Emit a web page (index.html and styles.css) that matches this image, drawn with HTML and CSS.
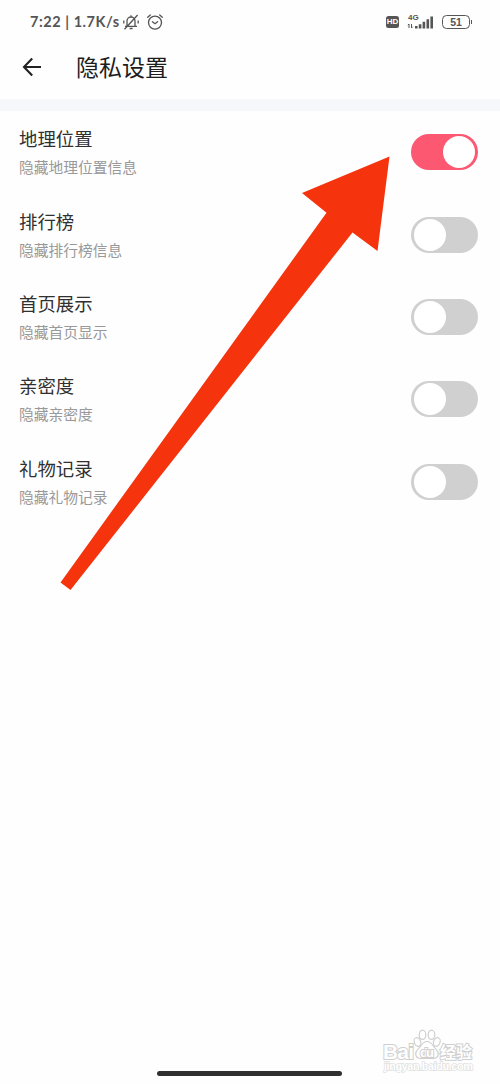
FILE: index.html
```html
<!DOCTYPE html>
<html lang="zh-CN">
<head>
<meta charset="utf-8">
<title>隐私设置</title>
<link rel="stylesheet" href="styles.css">
</head>
<body>
<div class="screen">
  <div class="status">
    <div class="status-left">
      <span class="status-text">7:22 | 1.7K/s</span>
      <svg class="bell" width="18" height="18" viewBox="0 0 18 18" fill="none" stroke="#555" stroke-width="1.3">
        <path d="M3 13.300h12M5 13V8a4 4 0 0 1 8 0v5M7.600 15.500h3M9 2.200V4M2.500 16.200 15.600 2M1.800 7.400v3.200M16.200 7.400v3.200"/>
      </svg>
      <svg class="alarm" width="18" height="18" viewBox="0 0 18 18" fill="none" stroke="#555" stroke-width="1.3" stroke-linecap="round">
        <circle cx="9" cy="9.6" r="6.500"/>
        <path d="M1.700 4.300 4.300 2M13.700 2l2.600 2.300M6.400 8.700 9 10.700l2.600-2"/>
      </svg>
    </div>
    <div class="status-right">
      <span class="hd">HD</span>
      <svg class="signal" width="28" height="18" viewBox="0 0 28 18">
        <text class="net" x="1" y="7.3">4G</text>
        <path d="M2 11v4M.8 12.200 2 11M4.500 11v4M4.500 15l1.200-1.200" fill="none" stroke="#555" stroke-width="1"/>
        <path d="M8 13h2.600v2.500H8zM11.800 11.200h2.600v4.300h-2.600zM15.600 8.800h2.600v6.700h-2.600zM19.500 6.200h2.600v9.300h-2.600zM23.400 3.500H26v12h-2.600z" fill="#555"/>
      </svg>
      <span class="battery">51</span>
    </div>
  </div>
  <header class="header">
    <svg width="20" height="20" viewBox="0 0 20 20" fill="none" stroke="#222" stroke-width="2.1">
      <path d="M19 10H2.200M10.200 1.600 2 10l8.200 8.400"/>
    </svg>
    <h1 class="title">隐私设置</h1>
  </header>
  <div class="band"></div>
  <main class="list">
    <div class="row"><div><div class="name">地理位置</div><div class="desc">隐藏地理位置信息</div></div><div class="toggle on"></div></div>
    <div class="row"><div><div class="name">排行榜</div><div class="desc">隐藏排行榜信息</div></div><div class="toggle"></div></div>
    <div class="row"><div><div class="name">首页展示</div><div class="desc">隐藏首页显示</div></div><div class="toggle"></div></div>
    <div class="row"><div><div class="name">亲密度</div><div class="desc">隐藏亲密度</div></div><div class="toggle"></div></div>
    <div class="row"><div><div class="name">礼物记录</div><div class="desc">隐藏礼物记录</div></div><div class="toggle"></div></div>
  </main>
  <svg class="arrow" width="500" height="600" viewBox="0 0 500 600">
    <path d="M389.500 156.500 302 193l24.500 19.700L60.500 582.500 70.500 590 352.500 232.500l25 18.500z" fill="#f5340e"/>
  </svg>
  <svg class="watermark" width="110" height="54" viewBox="0 0 110 54">
    <g fill="#fff" stroke="#cfcfcf" stroke-width="1.2">
      <ellipse cx="46.500" cy="18" rx="3.200" ry="4.500" transform="rotate(-20 46.500 18)"/>
      <ellipse cx="51.500" cy="10.800" rx="3.300" ry="4.600"/>
      <ellipse cx="60.500" cy="10.800" rx="3.300" ry="4.600"/>
      <ellipse cx="65.800" cy="18" rx="3.200" ry="4.500" transform="rotate(20 65.800 18)"/>
      <path d="M56 17.500c-4 0-5.500 3.500-7.500 6s-4 3.500-3.800 6.700c.3 3.600 3.500 4.600 6.300 4.300h10c2.800.3 6-.7 6.300-4.300.2-3.200-1.800-4.200-3.800-6.700s-3.500-6-7.500-6z"/>
    </g>
    <text class="mark" x="12" y="34.500" textLength="31">Bai</text>
    <text class="mark du" x="49" y="32.500" textLength="14">du</text>
    <text class="mark cn" x="69" y="33.500" textLength="32">经验</text>
    <text class="url" x="13" y="46" textLength="89">jingyan.baidu.com</text>
  </svg>
  <div class="home"></div>
</div>
</body>
</html>
```
FILE: styles.css
```css
body {
  margin: 0;
  background: #fefefe;
  font-family: "Noto Sans CJK SC", sans-serif;
}
.screen {
  position: relative;
  width: 500px;
  height: 1084px;
  overflow: hidden;
  display: flex;
  flex-direction: column;
}
.status {
  box-sizing: border-box;
  height: 44px;
  padding: 0 28px 0 30px;
  display: flex;
  align-items: center;
  justify-content: space-between;
  color: #555;
}
.status-left, .status-right {
  display: flex;
  align-items: center;
}
.status-text {
  width: 90px;
  font: 700 14.5px/20px Lato, sans-serif;
  letter-spacing: 0.55px;
  white-space: nowrap;
}
.bell { margin-left: 2px; }
.alarm { margin-left: 6px; }
.hd {
  width: 13px;
  height: 12px;
  border-radius: 2.5px;
  background: #555;
  color: #fff;
  font: bold 8px/12px "Liberation Sans", sans-serif;
  text-align: center;
}
.signal { margin-left: 8px; }
.net { font: bold 8px "Liberation Sans", sans-serif; fill: #555; }
.battery {
  position: relative;
  box-sizing: border-box;
  width: 28px;
  height: 14px;
  margin: 0 2px 0 7px;
  border: 1.5px solid #555;
  border-radius: 4.5px;
  font: bold 10.5px/12px "Liberation Sans", sans-serif;
  text-align: center;
}
.battery::after {
  content: "";
  position: absolute;
  right: -3px;
  top: 3.5px;
  width: 1.5px;
  height: 4px;
  background: #555;
}
.header {
  height: 55px;
  padding-left: 22px;
  display: flex;
  align-items: center;
  gap: 34px;
}
.header svg { margin-top: -9px; }
.title {
  margin: -11px 0 0;
  font-size: 23px;
  line-height: 34px;
  font-weight: 400;
  color: #1d1d1d;
}
.band { height: 12px; background: #f6f7fa; }
.list { padding: 0 22px 0 19px; }
.row {
  height: 82.4px;
  display: flex;
  align-items: center;
  justify-content: space-between;
}
.name {
  font-size: 18.4px;
  line-height: 28px;
  color: #303030;
}
.desc {
  margin-top: 2px;
  font-size: 14.75px;
  line-height: 26px;
  color: #999;
}
.toggle {
  box-sizing: border-box;
  width: 67px;
  height: 36px;
  padding: 2px 3px;
  border-radius: 18px;
  background: #d0d0d0;
  display: flex;
  align-items: center;
}
.toggle::before {
  content: "";
  width: 32px;
  height: 32px;
  border-radius: 50%;
  background: #fff;
}
.toggle.on { background: #fd5871; justify-content: flex-end; }
.arrow { position: absolute; left: 0; top: 0; }
.watermark { position: absolute; left: 371px; top: 1024px; }
.mark {
  font: bold 21px "Liberation Sans", sans-serif;
  fill: #fff;
  stroke: #cfcfcf;
  stroke-width: 2px;
  paint-order: stroke;
}
.du { font-size: 13px; }
.cn { font: bold 16px "Noto Sans CJK SC", sans-serif; }
.url {
  font: bold 11px "Liberation Sans", sans-serif;
  fill: #fff;
  stroke: #e0e0e0;
  stroke-width: 1.4px;
  paint-order: stroke;
}
.home {
  position: absolute;
  left: 157px;
  top: 1071px;
  width: 185px;
  height: 5px;
  border-radius: 3px;
  background: #303030;
}
```
